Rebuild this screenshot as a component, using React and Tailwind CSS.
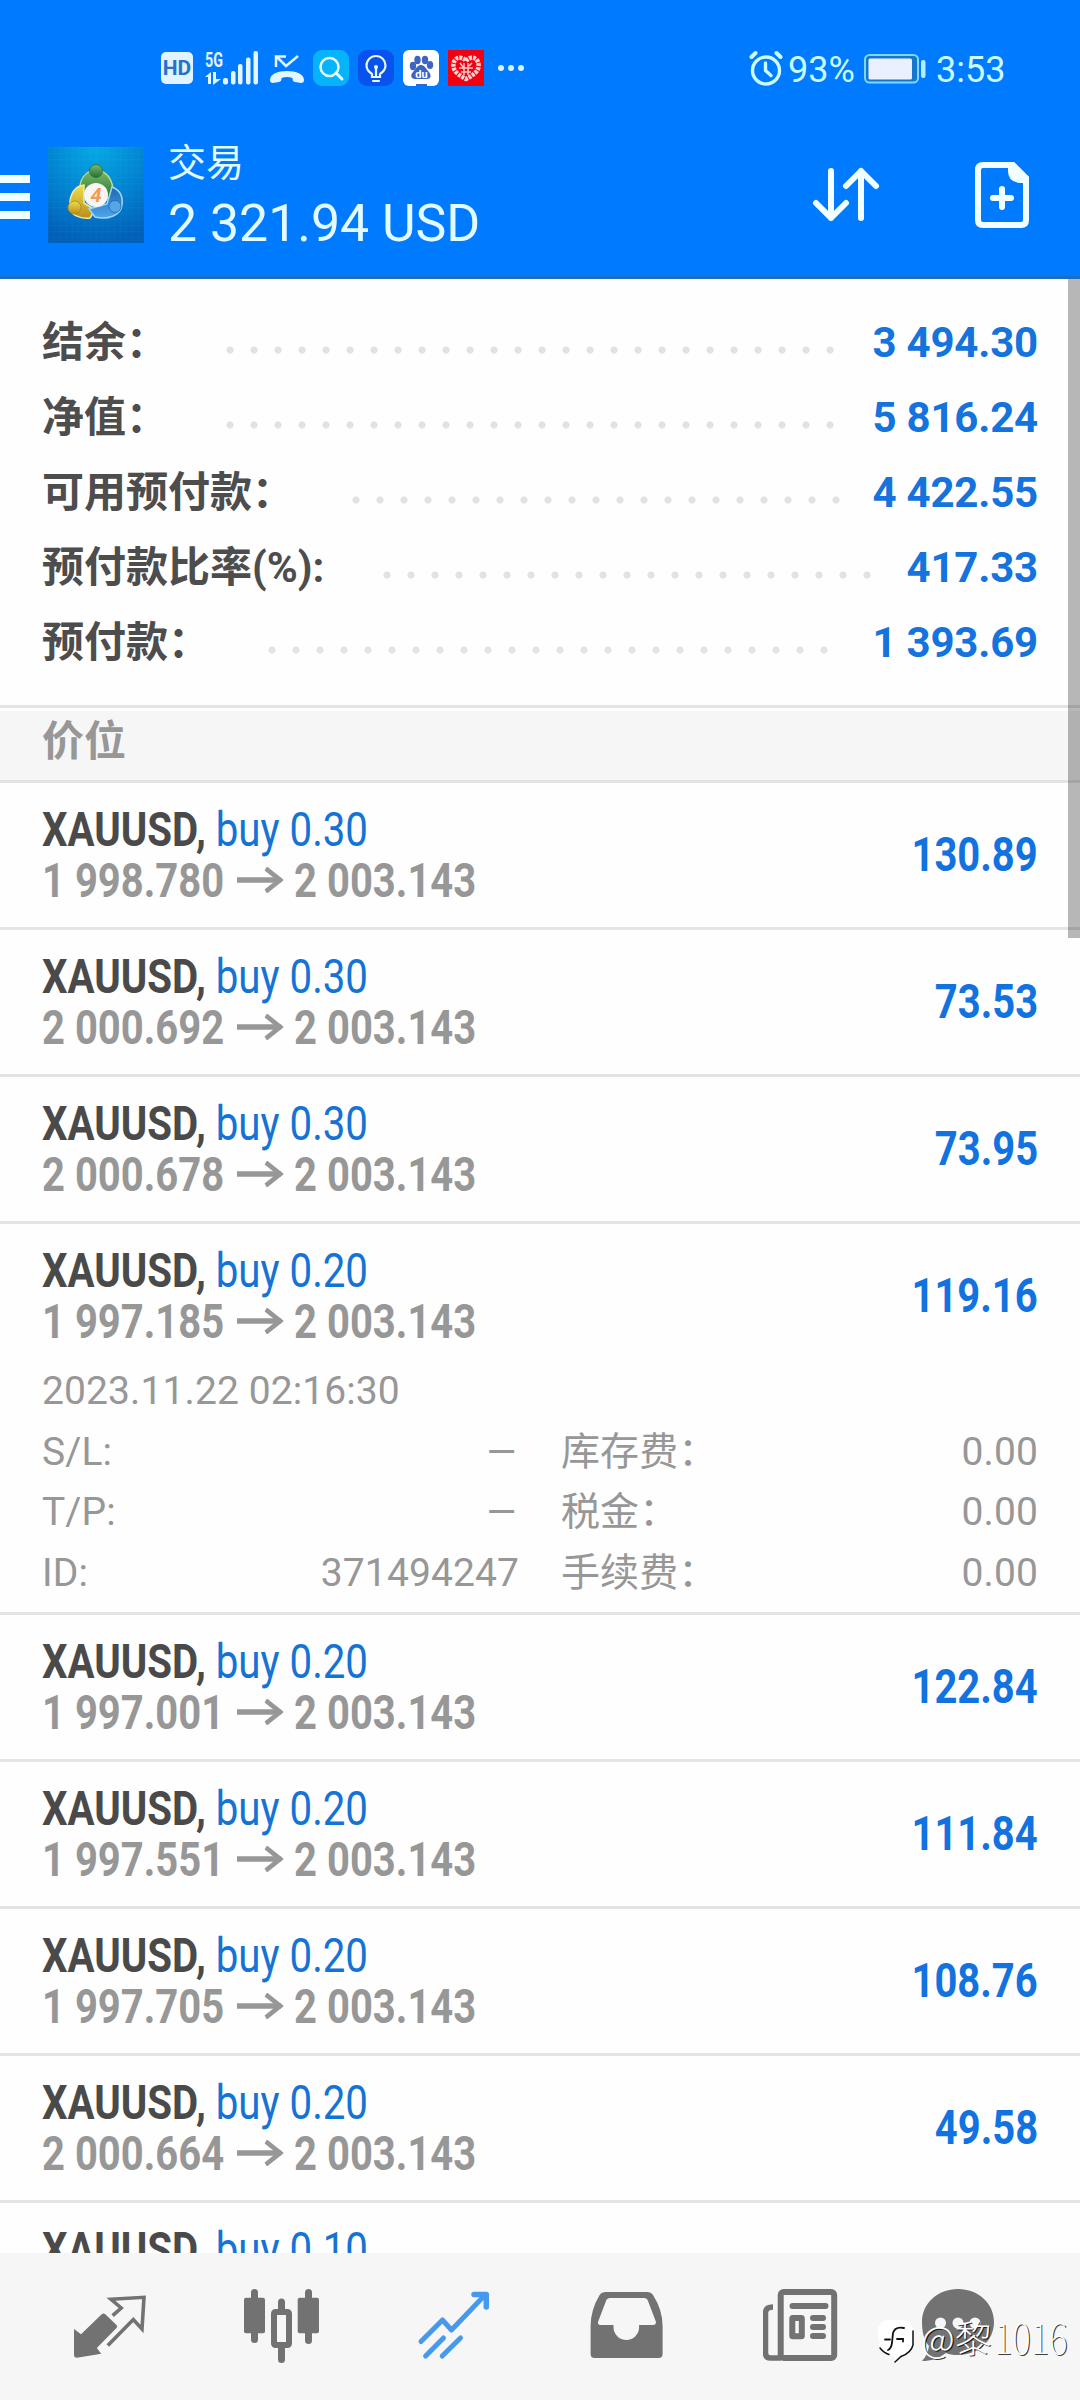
import clsx from 'clsx'

const summary = [
  { label: '结余：', value: '3 494.30', labelWidth: 'w-[175px]', dots: 26 },
  { label: '净值：', value: '5 816.24', labelWidth: 'w-[175px]', dots: 26 },
  { label: '可用预付款：', value: '4 422.55', labelWidth: 'w-[301px]', dots: 21 },
  { label: '预付款比率(%):', value: '417.33', labelWidth: 'w-[332px]', dots: 21 },
  { label: '预付款：', value: '1 393.69', labelWidth: 'w-[217px]', dots: 24 },
]

const positions = [
  { volume: '0.30', open: '1 998.780', profit: '130.89' },
  { volume: '0.30', open: '2 000.692', profit: '73.53' },
  { volume: '0.30', open: '2 000.678', profit: '73.95' },
  {
    volume: '0.20',
    open: '1 997.185',
    profit: '119.16',
    time: '2023.11.22 02:16:30',
    details: [
      ['S/L:', '–', '库存费：', '0.00'],
      ['T/P:', '–', '税金：', '0.00'],
      ['ID:', '371494247', '手续费：', '0.00'],
    ],
  },
  { volume: '0.20', open: '1 997.001', profit: '122.84' },
  { volume: '0.20', open: '1 997.551', profit: '111.84' },
  { volume: '0.20', open: '1 997.705', profit: '108.76' },
  { volume: '0.20', open: '2 000.664', profit: '49.58' },
]

function StatusBar() {
  return (
    <div className="flex h-[136px] items-center text-[36px] text-[#e4f6ff]">
      {/* HD */}
      <div className="ml-[161px] flex h-8 w-8 items-center justify-center rounded-[5px] bg-[#e0f3ff] text-[21px] font-bold leading-none text-[#2672c8]">
        HD
      </div>
      {/* Signal */}
      <svg className="ml-3 h-9 w-[54px] overflow-visible" viewBox="0 0 54 36" fill="currentColor">
        <text x="0" y="16.500" fontSize="21" fontWeight="700" textLength="18" lengthAdjust="spacingAndGlyphs">5G</text>
        <path d="M0 27l6-5v12h-3v-7zM8 22h3v7h5l-8 6z" />
        <rect x="18" y="28" width="5" height="6.500" rx="2" />
        <rect x="26" y="21" width="4.500" height="13.500" rx="2" />
        <rect x="33" y="14" width="4.500" height="20.500" rx="2" />
        <rect x="41" y="7.500" width="4.500" height="27" rx="2" />
        <rect x="48.500" y="1" width="4.500" height="33.500" rx="2" />
      </svg>
      {/* Missed call */}
      <svg className="ml-2.5 h-9 w-9" viewBox="0 0 36 36" fill="none">
        <path d="M7 17V6.500h10M8 7l9 9L29 6" stroke="currentColor" strokeWidth="2.500" />
        <path d="M1 30c0-6 8-9 17-9s17 3 17 9c0 2-1 3-3 3l-6-1c-2-.5-2.500-1.500-2.500-4-4-1.500-7-1.500-11 0 0 2.500-.5 3.500-2.500 4l-6 1c-2 0-3-1-3-3z" fill="currentColor" />
      </svg>
      {/* App notifications */}
      <div className="ml-2 flex gap-[9px]">
        <svg className="h-9 w-9" viewBox="0 0 36 36" fill="none">
          <rect width="36" height="36" rx="9" fill="#05b4fb" />
          <circle cx="16.500" cy="17" r="9" stroke="#e6faff" strokeWidth="2.500" />
          <path d="M23 23l6 6" stroke="#e6faff" strokeWidth="3" strokeLinecap="round" />
        </svg>
        <svg className="h-9 w-9" viewBox="0 0 36 36" fill="none" stroke="#e6faff" strokeWidth="2.200">
          <rect width="36" height="36" rx="9" fill="#0a52ee" stroke="none" />
          <path d="M14 27v-3c-3-2-5.500-4.500-5.500-8.500a9.500 9.500 0 0 1 19 0c0 4-2.500 6.500-5.500 8.500v3zM15 31h6M18 26v-8" strokeLinecap="round" />
          <circle cx="18" cy="17" r="2" fill="#e6faff" stroke="none" />
        </svg>
        <svg className="h-9 w-9" viewBox="0 0 36 36">
          <rect width="36" height="36" rx="6" fill="#fff" />
          <g fill="#3d63c4">
            <ellipse cx="10" cy="16" rx="3.200" ry="4.200" />
            <ellipse cx="14.500" cy="10" rx="3.200" ry="4.200" />
            <ellipse cx="22" cy="10" rx="3.200" ry="4.200" />
            <ellipse cx="27" cy="15" rx="3.200" ry="4" />
            <path d="M18 15c4 0 5 4 8 7 3 4 1.500 7-2 7H12c-4 0-5-4-2-7 3-3 4-7 8-7z" />
          </g>
          <path d="M13 35h11" stroke="#3d63c4" strokeWidth="2" />
          <text x="18.500" y="27.500" fontSize="11" fontWeight="700" fill="#fff" textAnchor="middle">du</text>
        </svg>
        <svg className="h-9 w-9" viewBox="0 0 36 36">
          <rect width="36" height="36" fill="#f00010" />
          <path d="M18 11c3-4 7-4 10-2 4 4 3 10 0 13-3 3-6 5-10 7-4-2-7-4-10-7-3-3-4-9 0-13 3-2 7-2 10 2z" fill="none" stroke="#ffd3d3" strokeWidth="4.500" strokeDasharray="3 1" />
          <path d="M12 13l3 4M24 13l-3 3M11 18h14M13 22h10M16 13v12M20 13v12" stroke="#ffc9c9" strokeWidth="1.500" />
        </svg>
      </div>
      <div className="ml-[14px] flex gap-1">
        <span className="h-1.5 w-1.5 rounded-full bg-[#d8f3ff]" />
        <span className="h-1.5 w-1.5 rounded-full bg-[#d8f3ff]" />
        <span className="h-1.5 w-1.5 rounded-full bg-[#d8f3ff]" />
      </div>

      {/* Alarm, battery, clock */}
      <svg className="ml-[225px] h-9 w-[34px]" viewBox="0 0 34 36" fill="none" stroke="#c9fbff" strokeWidth="3.400" strokeLinecap="round">
        <circle cx="17" cy="20.500" r="13.500" />
        <path d="M16.500 13v7.500l5.500 5" />
        <path d="M2.500 7l4-4M27.500 3l4 4" strokeWidth="4" />
      </svg>
      <span className="ml-[5px] mt-1 w-[67px] whitespace-nowrap leading-[42px] text-[#c9fbff]">93%</span>
      <svg className="ml-[9px] mt-px h-[30px] w-[62px]" viewBox="0 0 62 30">
        <rect x="1" y="1" width="53" height="27.500" rx="4.500" fill="#1676cc" stroke="#7fd6ff" strokeWidth="2" />
        <rect x="4.500" y="4.500" width="43.500" height="21" rx="1.500" fill="#eaf0ff" />
        <rect x="57" y="6" width="4.500" height="18" rx="2" fill="#b5ecff" />
      </svg>
      <span className="ml-2.5 mt-1 leading-[42px] text-[#c9fbff]">3:53</span>
    </div>
  )
}

function AppLogo() {
  return (
    <svg className="h-24 w-24" viewBox="0 0 96 96">
      <defs>
        <radialGradient id="sky" cx="50%" cy="0%" r="100%">
          <stop offset="0" stopColor="#05a9e4" />
          <stop offset="0.500" stopColor="#0285d2" />
          <stop offset="1" stopColor="#0160b8" />
        </radialGradient>
        <pattern id="mesh" width="6" height="6" patternUnits="userSpaceOnUse">
          <path d="M0 0H6M0 0V6" stroke="#fff" strokeOpacity="0.040" />
        </pattern>
        <linearGradient id="green" x2="0" y2="1">
          <stop offset="0" stopColor="#7dbb6a" />
          <stop offset="1" stopColor="#236f35" />
        </linearGradient>
        <linearGradient id="gold" x2="0" y2="1">
          <stop offset="0" stopColor="#f0dc4e" />
          <stop offset="1" stopColor="#b98f18" />
        </linearGradient>
        <linearGradient id="blue" x2="0" y2="1">
          <stop offset="0" stopColor="#1c67b4" />
          <stop offset="1" stopColor="#4ea6ea" />
        </linearGradient>
      </defs>
      <rect width="96" height="96" fill="url(#sky)" />
      <rect width="96" height="96" fill="url(#mesh)" />
      <path d="M32 46c-1-14 5-22 16-23 11 1 18 10 17 25l-8 5-9-14-9 10z" fill="url(#green)" stroke="#b9d894" strokeWidth="1.500" />
      <path d="M36 38c-9 1-15 9-14 22 0 8 10 12 20 11l5-8-11-7z" fill="url(#gold)" stroke="#f2eaa0" strokeWidth="1.500" />
      <path d="M64 40c8 3 11 10 10 18-1 11-15 15-27 12l-6-8 18-5z" fill="url(#blue)" stroke="#9fd4f8" strokeWidth="1.500" />
      <circle cx="48" cy="24" r="6.500" fill="url(#green)" stroke="#2d6f34" strokeWidth="0.800" />
      <circle cx="26.500" cy="60.500" r="6.500" fill="url(#gold)" stroke="#a58a26" strokeWidth="0.800" />
      <circle cx="67" cy="59.500" r="6" fill="#55a6e6" stroke="#2268b0" strokeWidth="0.800" />
      <circle cx="48" cy="48" r="12" fill="#f8f6f4" />
      <text x="48" y="55" fontSize="20" fontWeight="700" fontStyle="italic" fill="#f59a4e" textAnchor="middle">4</text>
    </svg>
  )
}

function Toolbar() {
  return (
    <div className="flex h-[140px] items-start text-[#e2fbff]">
      <div className="mt-[39px] flex w-[30px] flex-col gap-2.5">
        <span className="h-2 bg-[#f0ffff]" />
        <span className="h-2 bg-[#f0ffff]" />
        <span className="h-2 bg-[#f0ffff]" />
      </div>
      <div className="ml-[18px] mt-[11px]">
        <AppLogo />
      </div>
      <div className="ml-6 mt-[5px] w-[600px]">
        <div className="text-[38px] leading-[44px]">交易</div>
        <div className="mt-[9px] text-[51.8px] leading-[60px]">2 321.94 USD</div>
      </div>
      <svg className="ml-[44px] mt-[31px] h-[58px] w-[70px]" viewBox="0 0 70 58" fill="none" stroke="#f2ffff" strokeWidth="6" strokeLinecap="round" strokeLinejoin="round">
        <path d="M19 4v47M4 36l15 15 15-15" />
        <path d="M49 51V4M34 19L49 4l15 15" />
      </svg>
      <svg className="ml-[93px] mt-[26px] h-[66px] w-[54px]" viewBox="0 0 54 66" fill="none" stroke="#f2ffff" strokeWidth="6">
        <path d="M8 3h30l13 13v42q0 5-5 5H8q-5 0-5-5V8q0-5 5-5z" />
        <path d="M33 3h6l12 12v6h-6q-12-1-12-12z" fill="#f2ffff" stroke="none" />
        <path d="M27 27v18M18 36h18" strokeLinecap="round" />
      </svg>
    </div>
  )
}

function Summary() {
  return (
    <div className="pb-[25px] pl-[42px] pr-[42px] pt-[26px] text-[42px] font-bold">
      {summary.map((row) => (
        <div key={row.label} className="flex h-[75px] items-center leading-[75px]">
          <span className={clsx('shrink-0 whitespace-nowrap text-[#4d4d4d]', row.labelWidth)}>{row.label}</span>
          <span
            className="ml-px mt-[15px] h-2 shrink-0 bg-[radial-gradient(circle,#e2e2e2_3.2px,transparent_4px)] bg-[length:24px_8px]"
            style={{ width: row.dots * 24 }}
          />
          <span className="ml-auto whitespace-nowrap tracking-[-0.2px] text-[#1473dc]">{row.value}</span>
        </div>
      ))}
    </div>
  )
}

function Position({ item }) {
  return (
    <div className="shrink-0 border-b-3 border-[#e4e4e4] pl-[42px] pr-[42px]">
      <div className="flex h-36 items-center justify-between text-[48px] leading-[51px]">
        <div className="whitespace-nowrap">
          <div className="origin-left scale-x-[0.838]">
            <span className="font-bold text-[#4a4a4a]">XAUUSD,</span>{' '}
            <span className="text-[#1473d4]">buy {item.volume}</span>
          </div>
          <div className="flex origin-left scale-x-[0.833] items-center font-bold text-[#979797]">
            {item.open}
            <svg className="-mt-0.5 ml-[15px] mr-[13px] h-[26px] w-[56px]" viewBox="0 0 55 26" preserveAspectRatio="none" fill="none" stroke="currentColor">
              <path d="M0 13H52" strokeWidth="5.500" />
              <path d="M34 1.500L51 13 34 24.500" strokeWidth="5" />
            </svg>
            2 003.143
          </div>
        </div>
        <span className="-mt-0.5 origin-right scale-x-[0.832] font-bold text-[#1273e0]">{item.profit}</span>
      </div>
      {item.details && (
        <div className="-mt-[7px] h-[251px] text-[39px] leading-[60.7px] tracking-[0.1px] text-[#979797]">
          <div>{item.time}</div>
          {item.details.map(([name, value, feeName, fee]) => (
            <div key={name} className="flex">
              <span>{name}</span>
              <span className={clsx('ml-auto', value === '–' && 'origin-right scale-x-130')}>{value}</span>
              <span className="ml-[42px] w-[300px]">{feeName}</span>
              <span className="w-[177px] text-right">{fee}</span>
            </div>
          ))}
        </div>
      )}
    </div>
  )
}

// Next row in the list, only its top half shows above the bottom nav
function PartialPosition() {
  return (
    <div className="min-h-0 flex-1 overflow-hidden pl-[42px] pt-[21px] text-[48px] leading-[51px]">
      <div className="w-fit origin-left scale-x-[0.838] whitespace-nowrap">
        <span className="font-bold text-[#4a4a4a]">XAUUSD,</span>{' '}
        <span className="text-[#1473d4]">buy 0.10</span>
      </div>
    </div>
  )
}

function BottomNav() {
  return (
    <nav className="relative flex h-[147px] shrink-0 gap-[97px] bg-[#f6f6f6] pl-[71px] pt-9 text-[#727272]">
      {/* Quotes */}
      <svg className="h-[76px] w-[76px] shrink-0" viewBox="0 0 76 76" fill="none">
        <path d="M3 40l7 5.300 21-20.300q1.500-1 3 0l11.500 11q1.500 1.500 0 3L25.800 59l4.400 5.700L6 68.700q-3 0-3-3z" fill="currentColor" />
        <path d="M41.600 26.700l8.600-7.700L40 10.300l33-2L71 40l-8.700-9.500-25.500 26" stroke="currentColor" strokeWidth="3.600" />
      </svg>
      {/* Charts */}
      <svg className="h-[76px] w-[76px] shrink-0" viewBox="0 0 76 76" fill="currentColor">
        <rect x="0" y="8.700" width="21" height="35.500" rx="2" />
        <rect x="7" y="0" width="7" height="54" rx="3.500" />
        <rect x="30" y="23" width="15" height="33" rx="1.500" fill="none" stroke="currentColor" strokeWidth="6" />
        <path d="M34 21v-8a3.500 3.500 0 0 1 7 0v8zM34 58v12.500a3.500 3.500 0 0 0 7 0V58z" />
        <rect x="53.700" y="8.700" width="21.300" height="35.500" rx="2" />
        <rect x="61" y="0" width="7" height="55" rx="3.500" />
      </svg>
      {/* Trade */}
      <svg className="h-[76px] w-[76px] shrink-0" viewBox="0 0 76 76" fill="none" stroke="#4799ee" strokeWidth="5" strokeLinecap="round" strokeLinejoin="round">
        <path d="M4 52.500L25.500 31l9 10L68 6" />
        <path d="M57 5.500h12.300V18" strokeWidth="5.500" />
        <path d="M26.500 49L8.600 67M43.500 49L25.200 67" />
      </svg>
      {/* History */}
      <svg className="h-[76px] w-[76px] shrink-0" viewBox="0 0 76 76" fill="currentColor">
        <path
          fillRule="evenodd"
          d="M16 3h41q4 0 6 3 9.600 15 9.600 31v28a4 4 0 0 1-4 4h-64a4 4 0 0 1-4-4V37q0-16 9-31 2-3 6.400-3zM20 9q-3 0-4 3L8 33q-.5 3 2.500 3h13v2a12.800 13 0 0 0 25.600 0v-2H63q3 0 3-3l-8-21q-1-3-4-3z"
        />
      </svg>
      {/* News */}
      <svg className="h-[76px] w-[76px] shrink-0" viewBox="0 0 76 76" fill="none" stroke="currentColor" strokeWidth="6" strokeLinecap="round">
        <rect x="17.700" y="3" width="53.500" height="66" rx="3" />
        <path d="M10 18q-7.500 0-7.500 6v40q0 5 5 5H18" strokeWidth="5.500" strokeLinecap="butt" />
        <path d="M29.500 17h33M50 29h10M50 38h10M50 47h10" />
        <rect x="29.300" y="29" width="9.500" height="18.200" rx="0.500" />
      </svg>
      {/* Messages */}
      <svg className="-ml-4 h-[76px] w-[76px] shrink-0" viewBox="0 0 76 76" fill="currentColor">
        <path d="M38 0c20 0 36 14 36 33S58 66 38 66c-5 0-9-.5-12-2-8 6-15 8-24 8 4-4 6-9 7-15-5-6-7-14-7-24C2 14 18 0 38 0z" />
        <g fill="#f6f6f6">
          <circle cx="20.500" cy="34" r="5.500" />
          <circle cx="38" cy="34" r="5.500" />
          <circle cx="55" cy="34" r="5.500" />
        </g>
      </svg>

      {/* Watermark */}
      <div className="absolute left-[877px] top-[59px] flex items-start whitespace-nowrap font-['Noto_Sans_CJK_SC',sans-serif] font-light leading-[50px] text-white [text-shadow:1.2px_1.2px_0.5px_rgba(0,0,0,0.75)]">
        <svg className="mt-[7px] h-[46px] w-[38px]" viewBox="0 0 38 46" fill="none" strokeLinecap="round">
          <path d="M11 1h15q10 1 10 11v14q0 9-12 12l-6 6v-6l-5-2q-4-3-8-5l-4-5 2-3-2-4V12Q1 2 11 1z" fill="#fff" />
          <path d="M36 12v14q-2 8-12 11.500l-6 5.500M3 29q4 5 9 6.500" stroke="#111" strokeWidth="1.500" />
          <path d="M27 9q-9-2-11 5l-1 10q-1 6-4 7M8 20.500h5M20 20h6v2.500" stroke="#111" strokeWidth="1.800" />
        </svg>
        <span className="ml-[6px] text-[37px]">@黎</span>
        <span className="ml-[2px] origin-left scale-x-[0.86] text-[41px] font-thin leading-[48px]">1016</span>
      </div>
    </nav>
  )
}

export default function App() {
  return (
    <div className="relative flex h-[2400px] w-[1080px] flex-col overflow-hidden bg-[#fefefe] font-[Roboto,'Noto_Sans_CJK_SC',sans-serif]" lang="zh-CN">
      <header className="h-[279px] shrink-0 border-b-3 border-[#1a6fc0] bg-[#007aff]">
        <StatusBar />
        <Toolbar />
      </header>

      <main className="flex min-h-0 flex-1 flex-col overflow-hidden">
        <Summary />
        <div className="h-[78px] shrink-0 border-y-3 border-[#e4e4e4] pt-[3px]">
          <div className="h-[69px] bg-[#f6f6f6] pl-[42px] text-[42px] font-bold leading-[62px] text-[#979797]">价位</div>
        </div>
        {positions.map((item, i) => (
          <Position key={i} item={item} />
        ))}
        <PartialPosition />
      </main>

      <BottomNav />

      {/* Scroll thumb */}
      <div className="absolute right-0 top-[279px] h-[659px] w-3 bg-black/28" />
    </div>
  )
}
